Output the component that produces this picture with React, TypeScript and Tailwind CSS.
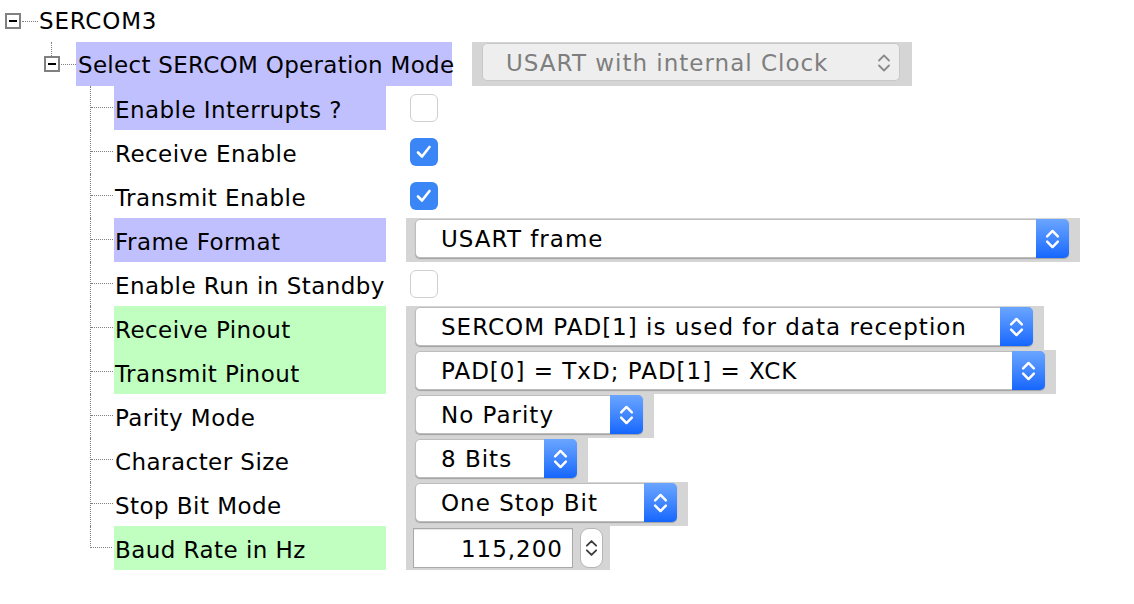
import React from "react";

type Ctrl =
  | { kind: "check"; checked: boolean }
  | { kind: "select"; text: string; cell: string; sel: string }
  | { kind: "baud" };

type Row = { label: string; band: string; ctrl: Ctrl };

const rows: Row[] = [
  { label: "Enable Interrupts ?", band: "bg-[#c0c0ff]", ctrl: { kind: "check", checked: false } },
  { label: "Receive Enable", band: "", ctrl: { kind: "check", checked: true } },
  { label: "Transmit Enable", band: "", ctrl: { kind: "check", checked: true } },
  {
    label: "Frame Format",
    band: "bg-[#c0c0ff]",
    ctrl: { kind: "select", text: "USART frame", cell: "w-[674px]", sel: "w-[654px]" },
  },
  { label: "Enable Run in Standby", band: "", ctrl: { kind: "check", checked: false } },
  {
    label: "Receive Pinout",
    band: "bg-[#c0ffc0]",
    ctrl: {
      kind: "select",
      text: "SERCOM PAD[1] is used for data reception",
      cell: "w-[638px]",
      sel: "w-[618px]",
    },
  },
  {
    label: "Transmit Pinout",
    band: "bg-[#c0ffc0]",
    ctrl: { kind: "select", text: "PAD[0] = TxD; PAD[1] = XCK", cell: "w-[650px]", sel: "w-[630px]" },
  },
  {
    label: "Parity Mode",
    band: "",
    ctrl: { kind: "select", text: "No Parity", cell: "w-[248px]", sel: "w-[228px]" },
  },
  {
    label: "Character Size",
    band: "",
    ctrl: { kind: "select", text: "8 Bits", cell: "w-[182px]", sel: "w-[162px]" },
  },
  {
    label: "Stop Bit Mode",
    band: "",
    ctrl: { kind: "select", text: "One Stop Bit", cell: "w-[282px]", sel: "w-[262px]" },
  },
  { label: "Baud Rate in Hz", band: "bg-[#c0ffc0]", ctrl: { kind: "baud" } },
];

function Chevrons({ color, w = 14, h = 22, sw = 2.2 }: { color: string; w?: number; h?: number; sw?: number }) {
  return (
    <svg width={w} height={h} viewBox="0 0 14 22" fill="none">
      <path d="M2 8.5 L7 3.5 L12 8.5" stroke={color} strokeWidth={sw} strokeLinecap="round" strokeLinejoin="round" />
      <path d="M2 13.5 L7 18.5 L12 13.5" stroke={color} strokeWidth={sw} strokeLinecap="round" strokeLinejoin="round" />
    </svg>
  );
}

function ExpandBox() {
  return (
    <div className="w-[16px] h-[16px] border-2 border-[#808080] bg-white flex items-center justify-center shrink-0">
      <div className="w-[8px] h-[2px] bg-black" />
    </div>
  );
}

function Checkbox({ checked }: { checked: boolean }) {
  if (checked) {
    return (
      <div className="w-[28px] h-[28px] rounded-[6px] bg-[#3b86f7] flex items-center justify-center">
        <svg width="28" height="28" viewBox="0 0 28 28" fill="none">
          <path d="M8 14.5 L12 18.5 L19.5 9" stroke="white" strokeWidth="2.6" strokeLinecap="round" strokeLinejoin="round" />
        </svg>
      </div>
    );
  }
  return <div className="w-[28px] h-[28px] rounded-[6px] bg-white border border-[#cfcfcf]" />;
}

function Select({ text, cell, sel }: { text: string; cell: string; sel: string }) {
  return (
    <div className={`h-[44px] bg-[#d5d5d5] pl-[9px] pt-[1px] ${cell}`}>
      <div
        className={`h-[39px] flex rounded-[5px] bg-white border border-[#bdbdbd] shadow-[0_1px_1px_rgba(0,0,0,0.25)] ${sel}`}
      >
        <div className="flex-1 flex items-center pl-[25px] pt-[2px] text-[23px] tracking-[1px] text-black whitespace-nowrap overflow-hidden">
          {text}
        </div>
        <div className="w-[33px] -my-px -mr-px rounded-r-[5px] bg-gradient-to-b from-[#6aa5ff] to-[#1466fe] flex items-center justify-center">
          <Chevrons color="white" w={15} h={24} sw={2.3} />
        </div>
      </div>
    </div>
  );
}

function Baud() {
  return (
    <div className="h-[44px] w-[204px] bg-[#d5d5d5] pl-[7px] pt-[2px] flex items-start gap-[7px]">
      <div className="h-[40px] w-[160px] bg-white border border-[#a9a9a9] shadow-[inset_0_1px_1px_rgba(0,0,0,0.1)] flex items-center justify-end pr-[9px] pt-[2px] text-[23px] tracking-[1px] text-black">
        115,200
      </div>
      <div className="h-[40px] w-[23px] rounded-[9px] bg-white border border-[#b5b5b5] flex items-center justify-center">
        <Chevrons color="#3d3d3d" w={13} h={26} sw={2} />
      </div>
    </div>
  );
}

export default function App() {
  return (
    <div className="w-[1134px] h-[604px] bg-white font-['DejaVu_Sans',sans-serif] text-black overflow-hidden">
      {/* Root node */}
      <div className="h-[42px] flex items-center pl-[5px]">
        <ExpandBox />
        <div className="w-[16px] ml-[1px] border-t border-dotted border-[#808080]" />
        <span className="ml-[1px] text-[23px] tracking-[0.8px]">SERCOM3</span>
      </div>

      {/* Select SERCOM Operation Mode */}
      <div className="h-[44px] flex">
        <div className="w-[43px] shrink-0" />
        <div className="w-[17px] flex flex-col items-center">
          <div className="h-[14px] border-l border-dotted border-[#808080]" />
          <ExpandBox />
        </div>
        <div className="w-[15px] self-center ml-[1px] border-t border-dotted border-[#808080]" />
        <div className="w-[376px] bg-[#c0c0ff] flex items-center pl-[2px] pt-[3px] text-[23px] tracking-[0.3px] whitespace-nowrap">
          Select SERCOM Operation Mode
        </div>
        <div className="ml-[20px] w-[440px] h-[44px] bg-[#d5d5d5] pl-[10px] pt-[1px]">
          <div className="w-[418px] h-[38px] rounded-[5px] bg-[#eeeeee] border border-[#c8c8c8] flex items-center pl-[23px] pr-[8px] pt-[2px] text-[23px] tracking-[1px] text-[#7e7e7e]">
            <span className="flex-1">USART with internal Clock</span>
            <Chevrons color="#8a8a8a" w={14} h={22} sw={1.8} />
          </div>
        </div>
      </div>

      {/* Children */}
      {rows.map((r, i) => {
        const last = i === rows.length - 1;
        return (
          <div key={r.label} className="h-[44px] flex">
            <div className="w-[90px] shrink-0" />
            <div className={`w-[24px] shrink-0 flex flex-col ${last ? "" : "border-l border-dotted border-[#808080]"}`}>
              <div
                className={`h-[22px] w-[22px] border-b border-dotted border-[#808080] ${
                  last ? "border-l" : ""
                }`}
              />
            </div>
            <div
              className={`w-[272px] shrink-0 flex items-center pl-[1px] pt-[4px] text-[23px] tracking-[0.45px] whitespace-nowrap ${r.band}`}
            >
              {r.label}
            </div>
            <div className="ml-[20px] flex items-center">
              {r.ctrl.kind === "check" && (
                <div className="pl-[4px]">
                  <Checkbox checked={r.ctrl.checked} />
                </div>
              )}
              {r.ctrl.kind === "select" && <Select text={r.ctrl.text} cell={r.ctrl.cell} sel={r.ctrl.sel} />}
              {r.ctrl.kind === "baud" && <Baud />}
            </div>
          </div>
        );
      })}
    </div>
  );
}
